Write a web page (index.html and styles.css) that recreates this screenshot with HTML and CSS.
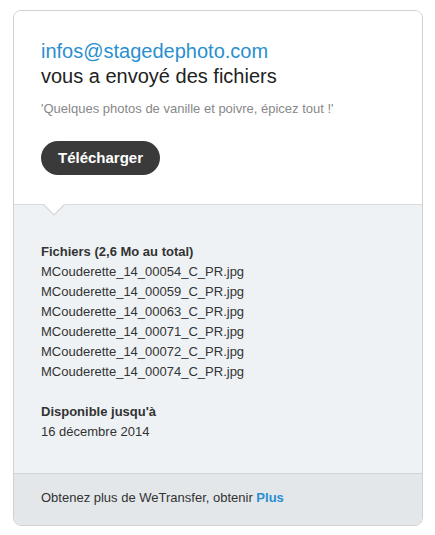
FILE: index.html
```html
<!DOCTYPE html>
<html lang="fr">
<head>
    <meta charset="UTF-8">
    <meta name="viewport" content="width=device-width, initial-scale=1.0">
    <title>WeTransfer</title>
    <link rel="stylesheet" href="styles.css">
</head>
<body>
    <div class="card">
        <div class="top">
            <div class="sender">infos@stagedephoto.com</div>
            <div class="headline">vous a envoyé des fichiers</div>
            <p class="message">'Quelques photos de vanille et poivre, épicez tout !'</p>
            <a class="download" href="#">Télécharger</a>
        </div>
        <div class="details">
            <span class="caret"></span>
            <div class="label">Fichiers (2,6 Mo au total)</div>
            <ul class="files">
                <li>MCouderette_14_00054_C_PR.jpg</li>
                <li>MCouderette_14_00059_C_PR.jpg</li>
                <li>MCouderette_14_00063_C_PR.jpg</li>
                <li>MCouderette_14_00071_C_PR.jpg</li>
                <li>MCouderette_14_00072_C_PR.jpg</li>
                <li>MCouderette_14_00074_C_PR.jpg</li>
            </ul>
            <div class="label expiry">Disponible jusqu'à</div>
            <div class="date">16 décembre 2014</div>
        </div>
        <div class="footer">
            Obtenez plus de WeTransfer, obtenir <a href="#">Plus</a>
        </div>
    </div>
</body>
</html>
```

FILE: styles.css
```css
body {
    font-family: "Liberation Sans", Arial, sans-serif;
    background-color: #fff;
    margin: 0;
    padding: 10px 12px 9px 13px;
    color: #333;
}

.card {
    border: 1px solid #cfd2d5;
    border-radius: 8px;
    overflow: hidden;
    width: 408px;
}

.top {
    background: #fff;
    padding: 28px 27px 29px;
}

.sender {
    color: #2a8fd0;
    font-size: 20px;
    line-height: 24px;
}

.headline {
    color: #222;
    font-size: 20px;
    line-height: 26px;
}

.message {
    color: #888;
    font-size: 13px;
    line-height: 15px;
    margin: 12px 0 25px;
}

.download {
    display: inline-block;
    background: #3a3a3a;
    color: #fff;
    font-weight: bold;
    font-size: 15px;
    text-decoration: none;
    line-height: 34px;
    padding: 0 17px;
    border-radius: 17px;
}

.details {
    position: relative;
    background: #eef2f5;
    border-top: 1px solid #d6dbdf;
    padding: 37px 27px 31px;
    font-size: 13px;
    line-height: 20px;
}

.caret {
    position: absolute;
    top: -1px;
    left: 28px;
    width: 0;
    height: 0;
    border-left: 12px solid transparent;
    border-right: 12px solid transparent;
    border-top: 12px solid #d6dbdf;
}

.caret::after {
    content: "";
    position: absolute;
    top: -13px;
    left: -11px;
    border-left: 11px solid transparent;
    border-right: 11px solid transparent;
    border-top: 11px solid #fff;
}

.label {
    font-weight: bold;
    color: #333;
}

.files {
    list-style: none;
    margin: 0;
    padding: 0;
}

.expiry {
    margin-top: 20px;
}

.footer {
    background: #e3e7ea;
    border-top: 1px solid #cfd4d8;
    padding: 14px 27px 17px;
    font-size: 13px;
    line-height: 20px;
    color: #333;
}

.footer a {
    color: #2a8fd0;
    font-weight: bold;
    text-decoration: none;
}
```
